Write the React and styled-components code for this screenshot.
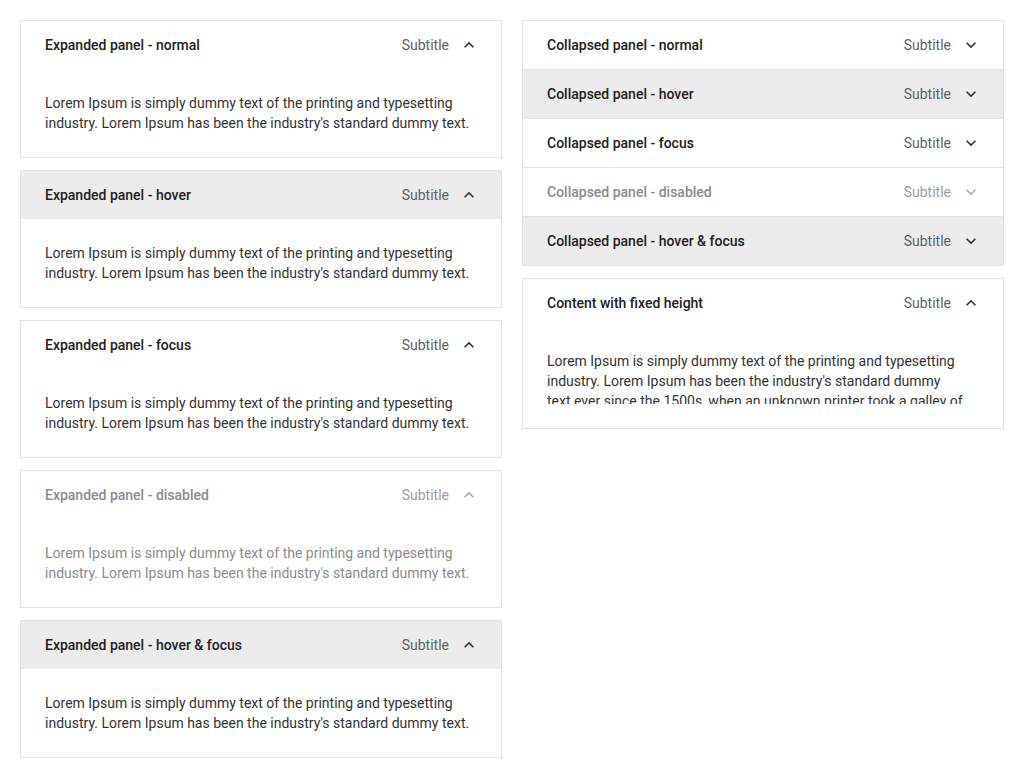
import React from 'react';
import styled, { createGlobalStyle } from 'styled-components';

const GlobalStyle = createGlobalStyle`
  html, body {
    margin: 0;
    padding: 0;
    background: #fff;
  }
  body {
    font-family: Roboto, "Noto Sans", "Liberation Sans", sans-serif;
    -webkit-font-smoothing: antialiased;
  }
`;

const lorem =
  "Lorem Ipsum is simply dummy text of the printing and typesetting industry. Lorem Ipsum has been the industry's standard dummy text.";

const loremLong =
  "Lorem Ipsum is simply dummy text of the printing and typesetting industry. Lorem Ipsum has been the industry's standard dummy text ever since the 1500s, when an unknown printer took a galley of type and scrambled it to make a type specimen book.";

const Page = styled.div`
  display: grid;
  grid-template-columns: 482px 482px;
  gap: 20px;
  padding: 20px;
  align-items: start;
`;

const Column = styled.div`
  display: flex;
  flex-direction: column;
  gap: 12px;
`;

const Group = styled.div`
  border: 1px solid #e2e2e2;
  background: #fff;
`;

const Panel = styled.div`
  & + & {
    border-top: 1px solid #e2e2e2;
  }
`;

const Header = styled.div`
  height: 48px;
  display: flex;
  align-items: center;
  padding: 0 22px 0 24px;
  background: ${(p) => (p.$hover ? '#ececec' : '#fff')};
  color: ${(p) => (p.$disabled ? '#8c8c8c' : '#212121')};
`;

const Title = styled.div`
  flex: 1;
  font-size: 14px;
  font-weight: 500;
`;

const Subtitle = styled.div`
  font-size: 14px;
  color: ${(p) => (p.$disabled ? '#9e9e9e' : '#5f5f5f')};
  margin-right: 10px;
`;

const Icon = styled.svg`
  width: 20px;
  height: 20px;
  fill: ${(p) => (p.$disabled ? '#a8a8a8' : '#333')};
`;

const Body = styled.div`
  padding: 24px ${(p) => (p.$fixed ? '39px' : '24px')} 24px 24px;
  font-size: 14px;
  line-height: 20px;
  color: ${(p) => (p.$disabled ? '#8c8c8c' : '#333')};
`;

const Clip = styled.div`
  height: 53px;
  overflow: hidden;
`;

const Chevron = ({ up, disabled }) => (
  <Icon viewBox="0 0 24 24" $disabled={disabled}>
    {up ? (
      <path d="M12 8l-6 6 1.41 1.41L12 10.83l4.59 4.58L18 14z" />
    ) : (
      <path d="M16.59 8.59L12 13.17 7.41 8.59 6 10l6 6 6-6z" />
    )}
  </Icon>
);

const Item = ({ title, open, hover, disabled, fixed }) => (
  <Panel>
    <Header $hover={hover} $disabled={disabled}>
      <Title>{title}</Title>
      <Subtitle $disabled={disabled}>Subtitle</Subtitle>
      <Chevron up={open} disabled={disabled} />
    </Header>
    {open && (
      <Body $disabled={disabled} $fixed={fixed}>
        {fixed ? <Clip>{loremLong}</Clip> : lorem}
      </Body>
    )}
  </Panel>
);

const expanded = [
  { title: 'Expanded panel - normal' },
  { title: 'Expanded panel - hover', hover: true },
  { title: 'Expanded panel - focus' },
  { title: 'Expanded panel - disabled', disabled: true },
  { title: 'Expanded panel - hover & focus', hover: true },
];

const collapsed = [
  { title: 'Collapsed panel - normal' },
  { title: 'Collapsed panel - hover', hover: true },
  { title: 'Collapsed panel - focus' },
  { title: 'Collapsed panel - disabled', disabled: true },
  { title: 'Collapsed panel - hover & focus', hover: true },
];

export default function App() {
  return (
    <>
      <GlobalStyle />
      <Page>
        <Column>
          {expanded.map((p) => (
            <Group key={p.title}>
              <Item {...p} open />
            </Group>
          ))}
        </Column>
        <Column>
          <Group>
            {collapsed.map((p) => (
              <Item key={p.title} {...p} />
            ))}
          </Group>
          <Group>
            <Item title="Content with fixed height" open fixed />
          </Group>
        </Column>
      </Page>
    </>
  );
}
